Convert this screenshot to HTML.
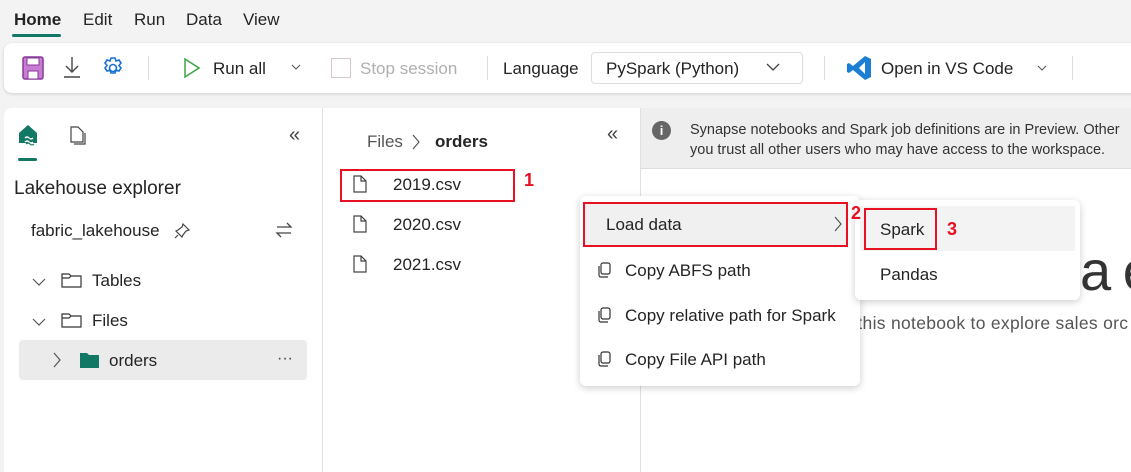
<!DOCTYPE html>
<html><head><meta charset="utf-8"><style>
*{margin:0;padding:0;box-sizing:border-box}
html,body{width:1131px;height:472px;overflow:hidden}
body{background:#f3f3f3;font-family:"Liberation Sans",sans-serif;color:#242424;position:relative}
.a{position:absolute;white-space:nowrap}
.t{font-size:17px}
.red{border:2px solid #e81123}
.num{color:#e81123;font-weight:bold;font-size:18px}
</style></head><body>
<div class="a t" style="left:14px;top:10px;font-weight:bold">Home</div>
<div class="a" style="left:12px;top:34px;width:49px;height:3px;background:#117865;border-radius:2px"></div>
<div class="a t" style="left:83px;top:10px">Edit</div>
<div class="a t" style="left:134px;top:10px">Run</div>
<div class="a t" style="left:186px;top:10px">Data</div>
<div class="a t" style="left:243px;top:10px">View</div>
<div class="a" style="left:4px;top:43px;width:1140px;height:50px;background:#fff;border-radius:8px;box-shadow:0 1px 3px rgba(0,0,0,.15)"></div>
<svg class="a" style="left:22px;top:56px" width="22" height="24"><rect x="1" y="1" width="20" height="22" rx="2" fill="#c77dd1" stroke="#8a3a9a" stroke-width="1.5"/><rect x="5" y="2" width="12" height="7" fill="#fff" stroke="#8a3a9a"/><rect x="6" y="15" width="10" height="8" fill="#fff" stroke="#8a3a9a"/></svg>
<svg class="a" style="left:61px;top:55px" width="22" height="24" fill="none" stroke="#444" stroke-width="1.4"><path d="M11 2v15M5 11l6 6 6-6M3 22h16"/></svg>
<svg class="a" style="left:101px;top:56px" width="24" height="24" fill="none" stroke="#1a73d0" stroke-width="1.6"><circle cx="12" cy="12" r="3.5"/><path d="M10 2h4l1 3 3-1 2 3-2 2.5 2 2.5-2 3-3-1-1 3h-4l-1-3-3 1-2-3 2-2.5-2-2.5 2-3 3 1z"/></svg>
<div class="a" style="left:148px;top:56px;width:1px;height:24px;background:#ddd"></div>
<svg class="a" style="left:182px;top:57px" width="20" height="22" fill="none" stroke="#3aa544" stroke-width="1.5"><path d="M3 2l14 9-14 9z"/></svg>
<div class="a t" style="left:213px;top:59px">Run all</div>
<svg class="a" style="left:290px;top:63px" width="12" height="8" fill="none" stroke="#555"><path d="M2 2l4 4 4-4"/></svg>
<div class="a" style="left:331px;top:58px;width:20px;height:20px;border:1px solid #d8c8c8"></div>
<div class="a t" style="left:360px;top:59px;color:#b0b0b0">Stop session</div>
<div class="a" style="left:487px;top:56px;width:1px;height:24px;background:#ddd"></div>
<div class="a t" style="left:503px;top:59px">Language</div>
<div class="a" style="left:591px;top:52px;width:212px;height:32px;border:1px solid #ddd;border-radius:4px"></div>
<div class="a t" style="left:606px;top:59px">PySpark (Python)</div>
<svg class="a" style="left:765px;top:62px" width="16" height="10" fill="none" stroke="#444" stroke-width="1.3"><path d="M2 2l6 6 6-6"/></svg>
<div class="a" style="left:824px;top:56px;width:1px;height:24px;background:#ddd"></div>
<svg class="a" style="left:846px;top:55px" width="26" height="26"><path d="M19 1l6 3v18l-6 3L7 15l-4 3-2-1V9l2-1 4 3zM19 7l-6 6 6 6z" fill="#1a7fd4" fill-rule="evenodd"/></svg>
<div class="a t" style="left:881px;top:59px">Open in VS Code</div>
<svg class="a" style="left:1036px;top:64px" width="12" height="8" fill="none" stroke="#555"><path d="M2 2l4 4 4-4"/></svg>
<div class="a" style="left:1072px;top:56px;width:1px;height:24px;background:#ddd"></div>
<!-- panels -->
<div class="a" style="left:4px;top:108px;width:1140px;height:380px;background:#fff;border-radius:8px"></div>
<div class="a" style="left:322px;top:108px;width:1px;height:364px;background:#e0e0e0"></div>
<div class="a" style="left:640px;top:108px;width:1px;height:364px;background:#e0e0e0"></div>
<svg class="a" style="left:17px;top:123px" width="24" height="24"><path d="M2 10L11 2l9 8v10H2z" fill="#117865"/><path d="M8 15q2-2 4 0t4 0M8 19q2-2 4 0t4 0" stroke="#fff" fill="none" stroke-width="1.3"/><path d="M9 17q2-2 4 0t4 0M9 21q2-2 4 0t4 0" stroke="#117865" fill="none" stroke-width="1.2"/></svg>
<div class="a" style="left:18px;top:158px;width:19px;height:3px;background:#117865;border-radius:2px"></div>
<svg class="a" style="left:69px;top:125px" width="18" height="22" fill="none" stroke="#444" stroke-width="1.2"><path d="M2 2h7l5 5v10H2z"/><path d="M5 19h11V8"/></svg>
<div class="a" style="left:289px;top:124px;font-size:20px;color:#444">«</div>
<div class="a" style="left:14px;top:178px;font-size:19px">Lakehouse explorer</div>
<div class="a t" style="left:31px;top:221px">fabric_lakehouse</div>
<svg class="a" style="left:173px;top:222px" width="18" height="18" fill="none" stroke="#444" stroke-width="1.2"><path d="M10 2l6 6-3 1-3 4-1 2-6-6 2-1 4-3zM5 13l-3 3"/></svg>
<svg class="a" style="left:274px;top:221px" width="20" height="18" fill="none" stroke="#444" stroke-width="1.3"><path d="M3 6h14l-4-4M17 12H3l4 4"/></svg>
<svg class="a" style="left:32px;top:277px" width="14" height="10" fill="none" stroke="#555" stroke-width="1.2"><path d="M1 2l6 6 6-6"/></svg>
<svg class="a" style="left:61px;top:271px" width="22" height="18" fill="none" stroke="#333" stroke-width="1.2"><path d="M1 3h7l2 2h10v11H1z M1 7h7l2-2"/></svg>
<div class="a t" style="left:92px;top:271px">Tables</div>
<svg class="a" style="left:32px;top:317px" width="14" height="10" fill="none" stroke="#555" stroke-width="1.2"><path d="M1 2l6 6 6-6"/></svg>
<svg class="a" style="left:61px;top:311px" width="22" height="18" fill="none" stroke="#333" stroke-width="1.2"><path d="M1 3h7l2 2h10v11H1z M1 7h7l2-2"/></svg>
<div class="a t" style="left:92px;top:311px">Files</div>
<div class="a" style="left:19px;top:340px;width:288px;height:40px;background:#ebebeb;border-radius:4px"></div>
<svg class="a" style="left:52px;top:352px" width="10" height="16" fill="none" stroke="#555" stroke-width="1.2"><path d="M2 1l6 7-6 7"/></svg>
<svg class="a" style="left:79px;top:350px" width="22" height="20"><path d="M1 3h7l2 2h10v13H1z" fill="#117865"/></svg>
<div class="a t" style="left:109px;top:351px">orders</div>
<div class="a" style="left:277px;top:350px;font-size:16px;color:#444">···</div>
<!-- middle -->
<div class="a t" style="left:367px;top:132px;color:#555">Files</div>
<svg class="a" style="left:411px;top:134px" width="10" height="16" fill="none" stroke="#555" stroke-width="1.2"><path d="M2 1l6 7-6 7"/></svg>
<div class="a t" style="left:435px;top:132px;font-weight:bold">orders</div>
<div class="a" style="left:607px;top:123px;font-size:20px;color:#444">«</div>
<div class="a red" style="left:340px;top:169px;width:175px;height:33px"></div>
<div class="a num" style="left:524px;top:170px">1</div>
<svg class="a" style="left:352px;top:174px" width="16" height="20" fill="none" stroke="#444" stroke-width="1.2"><path d="M2 2h7l5 5v11H2z M9 2v5h5"/></svg>
<div class="a t" style="left:393px;top:175px">2019.csv</div>
<svg class="a" style="left:352px;top:214px" width="16" height="20" fill="none" stroke="#444" stroke-width="1.2"><path d="M2 2h7l5 5v11H2z M9 2v5h5"/></svg>
<div class="a t" style="left:393px;top:215px">2020.csv</div>
<svg class="a" style="left:352px;top:254px" width="16" height="20" fill="none" stroke="#444" stroke-width="1.2"><path d="M2 2h7l5 5v11H2z M9 2v5h5"/></svg>
<div class="a t" style="left:393px;top:255px">2021.csv</div>
<!-- right -->
<div class="a" style="left:641px;top:108px;width:490px;height:61px;background:#eeeeee;border-bottom:1px solid #ddd"></div>
<div class="a" style="left:652px;top:121px;width:19px;height:19px;border-radius:50%;background:#666;color:#fff;font-size:13px;font-weight:bold;text-align:center;line-height:19px">i</div>
<div class="a" style="left:690px;top:120px;font-size:14.5px;line-height:20px;color:#333">Synapse notebooks and Spark job definitions are in Preview. Other<br>you trust all other users who may have access to the workspace.</div>
<div class="a" style="left:1080px;top:238px;font-size:56px;color:#333;letter-spacing:-2px">a e</div>
<div class="a t" style="left:838px;top:313px;color:#555;font-size:17.5px;letter-spacing:0.3px">in this notebook to explore sales orc</div>
<!-- context menu -->
<div class="a" style="left:580px;top:196px;width:280px;height:190px;background:#fff;border-radius:6px;box-shadow:0 2px 8px rgba(0,0,0,.2)"></div>
<div class="a" style="left:584px;top:203px;width:263px;height:43px;background:#f0f0f0"></div>
<div class="a red" style="left:583px;top:202px;width:265px;height:45px"></div>
<div class="a t" style="left:606px;top:215px">Load data</div>
<svg class="a" style="left:833px;top:216px" width="10" height="16" fill="none" stroke="#555" stroke-width="1.2"><path d="M2 1l6 7-6 7"/></svg>
<svg class="a" style="left:597px;top:262px" width="14" height="16" fill="none" stroke="#333" stroke-width="1.2"><rect x="4" y="1" width="9" height="11" rx="2"/><path d="M2 4v9a2 2 0 002 2h7"/></svg>
<div class="a t" style="left:625px;top:261px">Copy ABFS path</div>
<svg class="a" style="left:597px;top:307px" width="14" height="16" fill="none" stroke="#333" stroke-width="1.2"><rect x="4" y="1" width="9" height="11" rx="2"/><path d="M2 4v9a2 2 0 002 2h7"/></svg>
<div class="a t" style="left:625px;top:306px">Copy relative path for Spark</div>
<svg class="a" style="left:597px;top:351px" width="14" height="16" fill="none" stroke="#333" stroke-width="1.2"><rect x="4" y="1" width="9" height="11" rx="2"/><path d="M2 4v9a2 2 0 002 2h7"/></svg>
<div class="a t" style="left:625px;top:350px">Copy File API path</div>
<!-- submenu -->
<div class="a" style="left:855px;top:200px;width:225px;height:100px;background:#fff;border-radius:6px;box-shadow:0 2px 8px rgba(0,0,0,.2)"></div>
<div class="a" style="left:860px;top:206px;width:215px;height:45px;background:#f3f3f3"></div>
<div class="a red" style="left:864px;top:208px;width:73px;height:42px"></div>
<div class="a t" style="left:880px;top:220px">Spark</div>
<div class="a num" style="left:947px;top:219px">3</div>
<div class="a t" style="left:880px;top:265px">Pandas</div>
<div class="a num" style="left:851px;top:203px">2</div>
</body></html>
